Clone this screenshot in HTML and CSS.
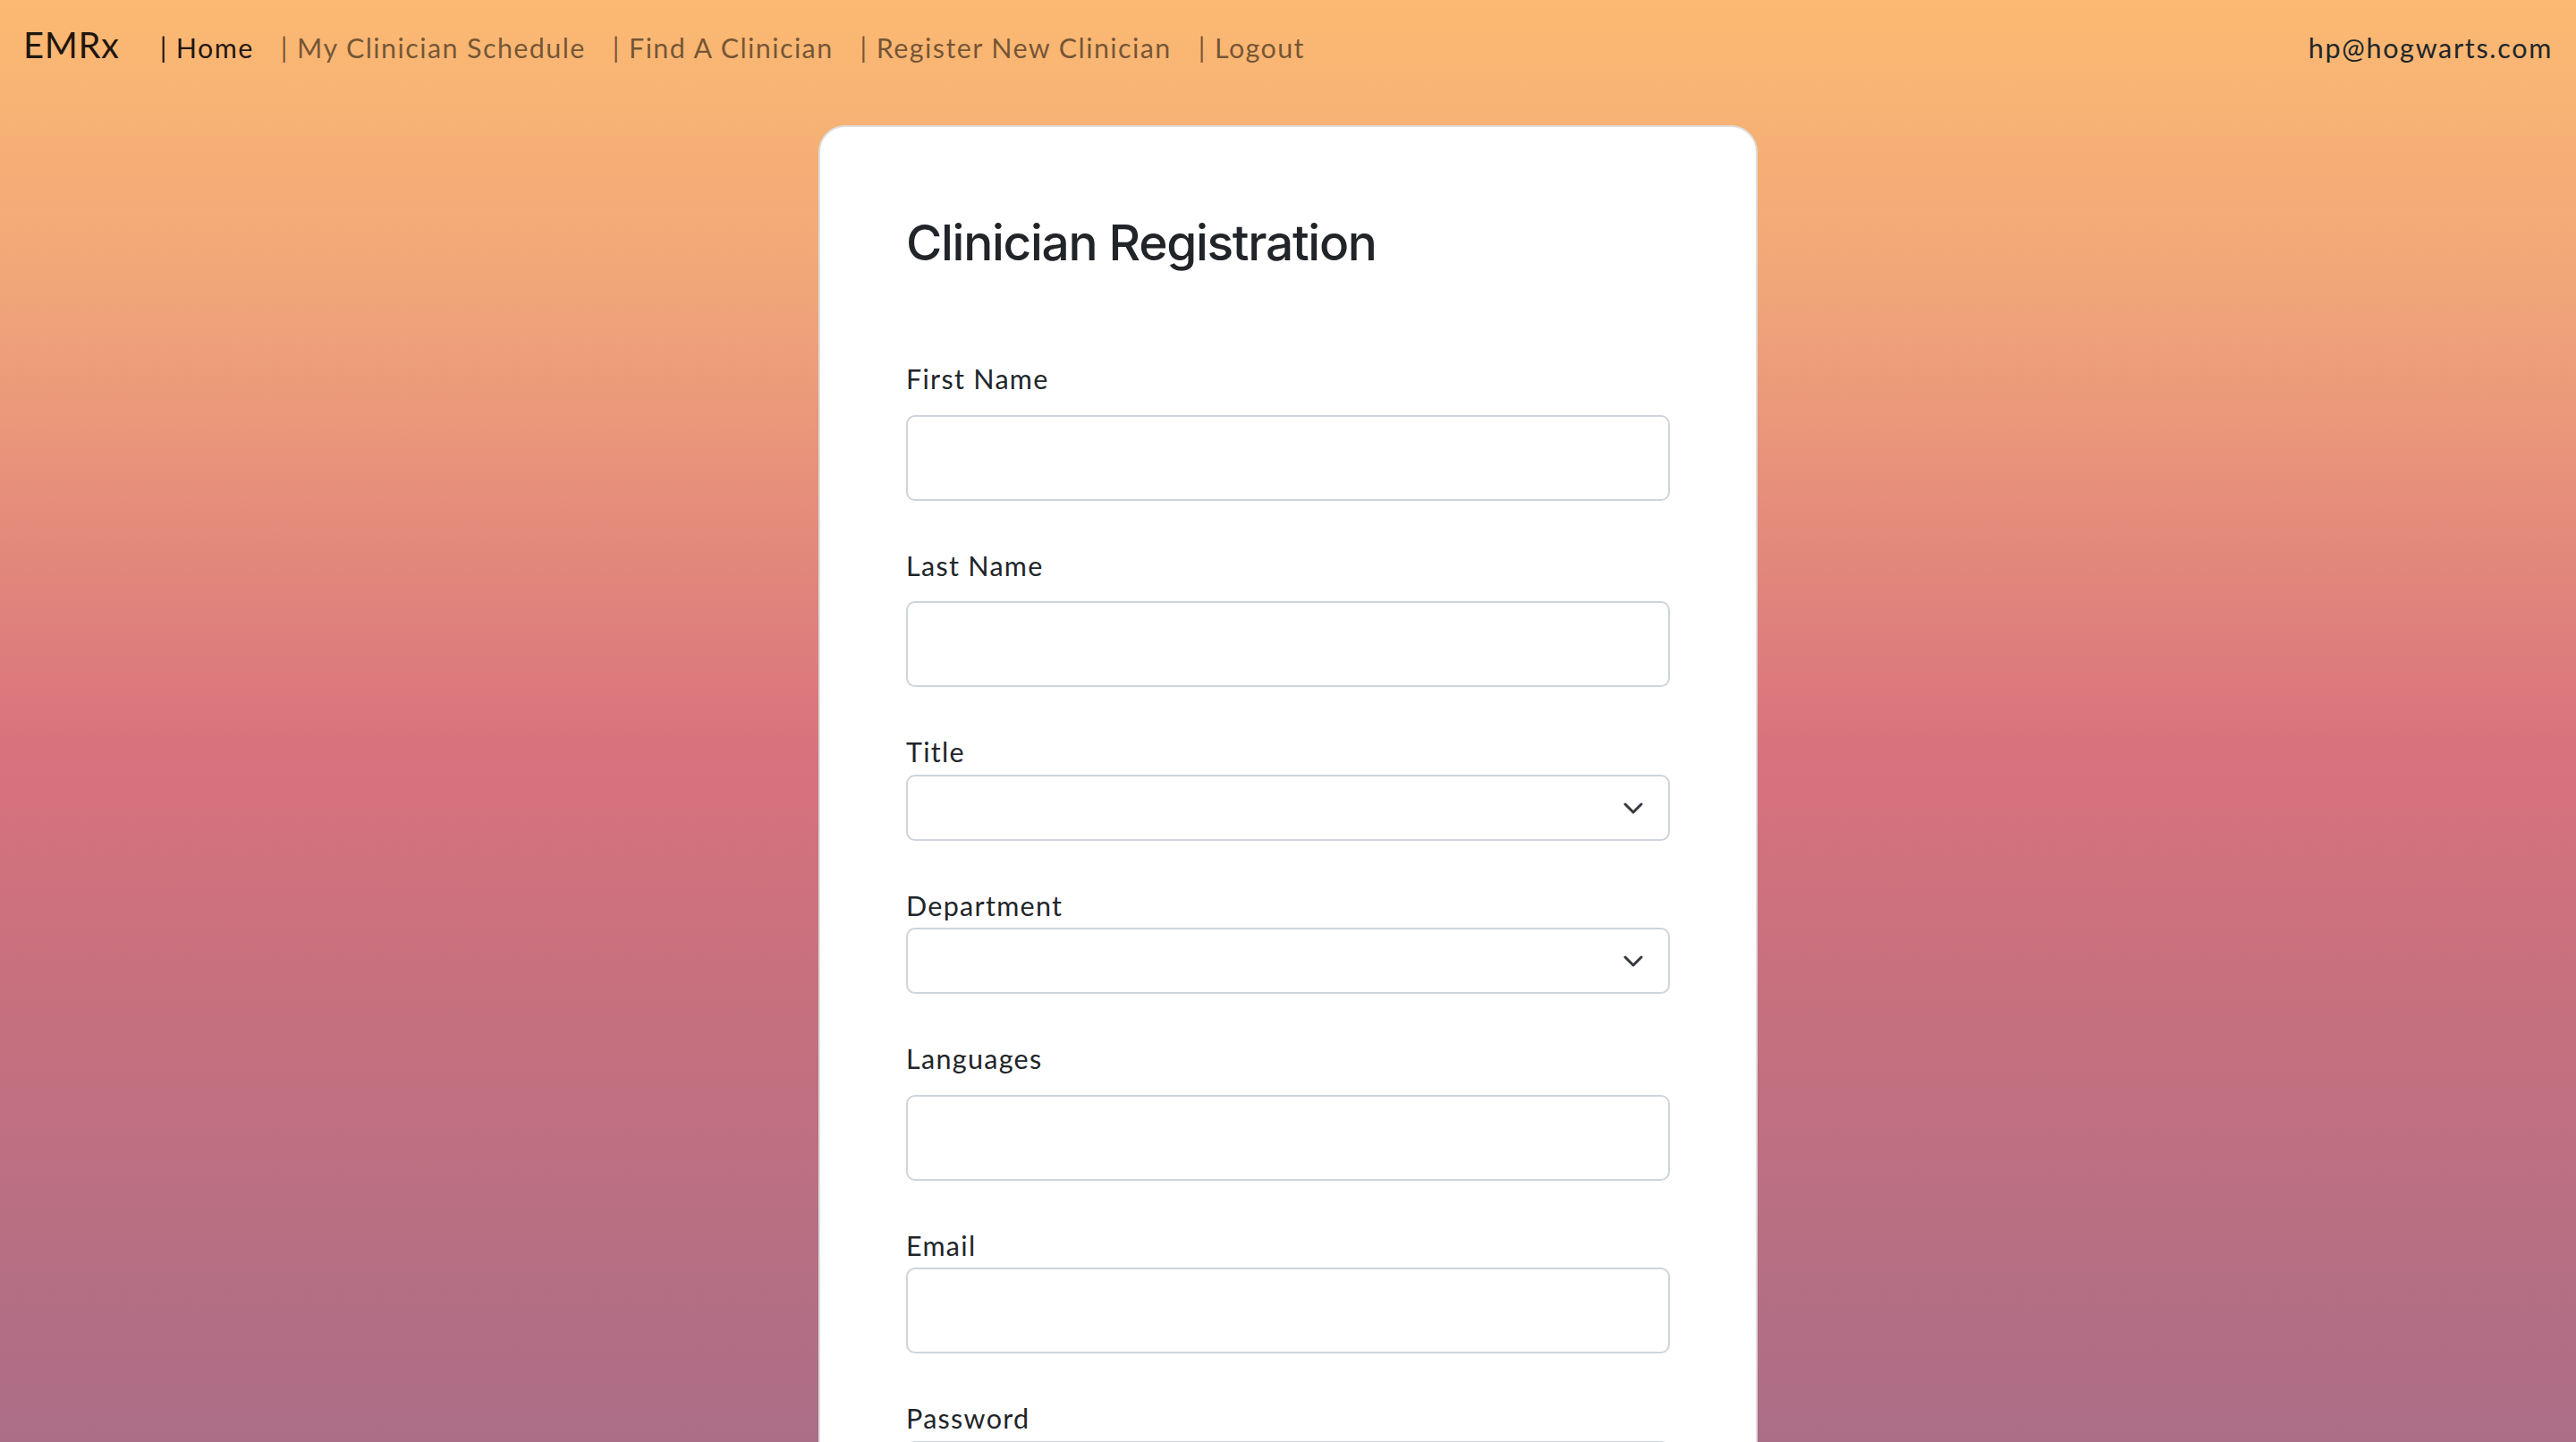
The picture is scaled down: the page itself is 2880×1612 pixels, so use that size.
FILE: index.html
```html
<!DOCTYPE html>
<html lang="en">
<head>
<meta charset="utf-8">
<title>EMRx - Clinician Registration</title>
<link rel="stylesheet" href="styles.css">
</head>
<body>
<nav class="topnav">
  <a class="brand" href="#">EMRx</a>
  <ul class="links">
    <li><a class="link active" href="#">| Home</a></li>
    <li><a class="link" href="#">| My Clinician Schedule</a></li>
    <li><a class="link" href="#">| Find A Clinician</a></li>
    <li><a class="link" href="#">| Register New Clinician</a></li>
    <li><a class="link" href="#">| Logout</a></li>
  </ul>
  <span class="user">hp@hogwarts.com</span>
</nav>

<main class="card">
  <h2 class="title">Clinician Registration</h2>
  <form class="form">
    <div class="group">
      <label class="label" for="fn">First Name</label>
      <input class="control spaced" id="fn" type="text">
    </div>
    <div class="group">
      <label class="label" for="ln">Last Name</label>
      <input class="control spaced" id="ln" type="text">
    </div>
    <div class="group">
      <label class="label" for="ti">Title</label>
      <div class="select-wrap">
        <select class="select" id="ti"><option></option></select>
        <svg class="chevron" viewBox="0 0 22 13" width="22" height="13"><path d="M2 2 L11 11 L20 2" fill="none" stroke="#343a40" stroke-width="3" stroke-linecap="round" stroke-linejoin="round"/></svg>
      </div>
    </div>
    <div class="group">
      <label class="label" for="de">Department</label>
      <div class="select-wrap">
        <select class="select" id="de"><option></option></select>
        <svg class="chevron" viewBox="0 0 22 13" width="22" height="13"><path d="M2 2 L11 11 L20 2" fill="none" stroke="#343a40" stroke-width="3" stroke-linecap="round" stroke-linejoin="round"/></svg>
      </div>
    </div>
    <div class="group">
      <label class="label" for="la">Languages</label>
      <input class="control spaced" id="la" type="text">
    </div>
    <div class="group">
      <label class="label" for="em">Email</label>
      <input class="control" id="em" type="email">
    </div>
    <div class="group">
      <label class="label" for="pw">Password</label>
      <input class="control" id="pw" type="password">
    </div>
  </form>
</main>
</body>
</html>
```

FILE: styles.css
```css
* { box-sizing: border-box; }

html, body { margin: 0; padding: 0; }

body {
  min-height: 100vh;
  background: linear-gradient(180deg, #fbba72 0%, #f1a679 20%, #d8727d 52%, #c4707f 72%, #ab6e87 100%) fixed;
  font-family: "Lato", "Open Sans", sans-serif;
  color: #212529;
}

.topnav {
  display: flex;
  align-items: baseline;
  height: 104px;
  padding: 26px 26px 0 26px;
  font-size: 30.5px;
  line-height: 1.2;
  letter-spacing: 1.4px;
}

.brand {
  font-size: 40px;
  letter-spacing: 0.6px;
  color: rgba(0, 0, 0, 0.88);
  text-decoration: none;
  margin-right: 45px;
}

.links {
  display: flex;
  gap: 30px;
  list-style: none;
  margin: 0;
  padding: 0;
}

.link {
  color: rgba(0, 0, 0, 0.55);
  text-decoration: none;
}

.link.active { color: rgba(0, 0, 0, 0.88); }

.user {
  margin-left: auto;
  letter-spacing: 1.7px;
  color: #212529;
}

.card {
  width: 1050px;
  margin: 36px auto 0;
  background: #fff;
  border: 2px solid #dedede;
  border-radius: 30px;
  padding: 96px 96px 80px;
}

.title {
  margin: 0 0 98px;
  font-family: "Inter", "Liberation Sans", sans-serif;
  font-weight: 500;
  font-size: 55px;
  line-height: 66px;
  color: #212529;
  letter-spacing: -1.3px;
}

.group { margin-bottom: 51px; }

.label {
  display: block;
  font-size: 30.5px;
  letter-spacing: 1.3px;
  line-height: 43.5px;
  margin-bottom: 3px;
  color: #212529;
}

.control {
  display: block;
  width: 100%;
  height: 96px;
  border: 2px solid #ced4da;
  border-radius: 10px;
  background: #fff;
  font: inherit;
}

.control.spaced { margin-top: 18px; }

.select-wrap { position: relative; }

.select {
  display: block;
  width: 100%;
  height: 74px;
  border: 2px solid #ced4da;
  border-radius: 10px;
  background: #fff;
  appearance: none;
  -webkit-appearance: none;
  font: inherit;
}

.chevron {
  position: absolute;
  right: 30px;
  top: 31px;
  pointer-events: none;
}
```
